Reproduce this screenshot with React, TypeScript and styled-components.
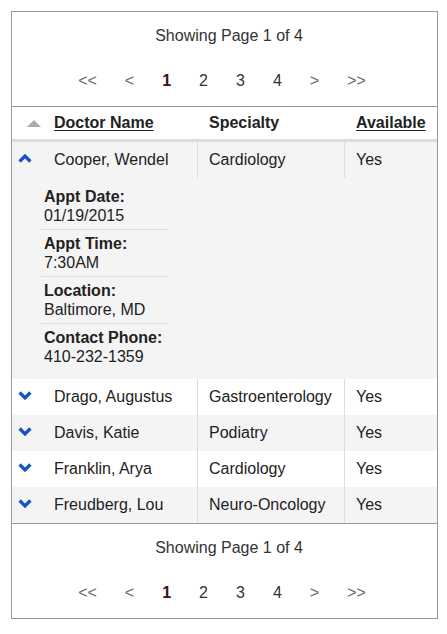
import React from "react";
import styled, { createGlobalStyle } from "styled-components";

const GlobalStyle = createGlobalStyle`
  html, body { margin: 0; padding: 0; background: #fff; }
  body { font-family: "Liberation Sans", Arial, sans-serif; }
`;

const Page = styled.div`
  padding: 11px;
`;

const Card = styled.div`
  width: 427px;
  box-sizing: border-box;
  border: 1px solid #999;
  background: #fff;
  color: #222;
  font-size: 16px;
`;

const PagerSection = styled.div<{ $position: "top" | "bottom" }>`
  height: 95px;
  box-sizing: border-box;
  padding-top: 15px;
  display: flex;
  flex-direction: column;
  align-items: center;
  ${(p) => (p.$position === "top" ? "border-bottom: 1px solid #999;" : "border-top: 1px solid #999;")}
`;

const Status = styled.div`
  line-height: 18px;
  color: #333;
  padding-left: 9px;
`;

const Pager = styled.div`
  margin-top: 27px;
  display: flex;
  gap: 28px;
  line-height: 18px;
  padding-right: 5px;
`;

const PageLink = styled.span<{ $kind: "arrow" | "num" | "active" }>`
  color: ${(p) => (p.$kind === "arrow" ? "#666" : p.$kind === "active" ? "#3d1010" : "#333")};
  font-weight: ${(p) => (p.$kind === "active" ? "bold" : "normal")};
  cursor: pointer;
`;

const GridRow = styled.div`
  display: grid;
  grid-template-columns: 185px 147px 93px;
`;

const HeaderRow = styled(GridRow)`
  height: 35px;
  box-sizing: border-box;
  border-bottom: 3px solid #ddd;
  font-weight: bold;
`;

const HeaderCell = styled.div<{ $first?: boolean; $underline?: boolean }>`
  display: flex;
  align-items: center;
  gap: 13px;
  padding-left: ${(p) => (p.$first ? "15px" : "12px")};
  text-decoration: ${(p) => (p.$underline ? "underline" : "none")};
  text-underline-offset: 2px;
`;

const SortLabel = styled.span`
  text-decoration: underline;
  text-underline-offset: 2px;
`;

const SortTriangle = styled.span`
  width: 0;
  height: 0;
  border-left: 7px solid transparent;
  border-right: 7px solid transparent;
  border-bottom: 7px solid #aaa;
`;

const BodyRow = styled(GridRow)<{ $alt: boolean }>`
  height: 36px;
  background: ${(p) => (p.$alt ? "#f4f4f4" : "#fff")};
`;

const Cell = styled.div<{ $first?: boolean }>`
  display: flex;
  align-items: center;
  gap: 22px;
  padding-left: ${(p) => (p.$first ? "6px" : "11px")};
  border-left: ${(p) => (p.$first ? "none" : "1px solid #ddd")};
  white-space: nowrap;
`;

const ChevronBox = styled.span`
  width: 14px;
  height: 9px;
  display: flex;
  margin-top: -4px;
`;

const Details = styled.div<{ $alt: boolean }>`
  background: ${(p) => (p.$alt ? "#f4f4f4" : "#fff")};
  padding: 5px 0 9px 29px;
`;

const DetailBlock = styled.div`
  width: 125px;
  padding: 4px 0 4px 3px;
  line-height: 19px;
  & + & {
    border-top: 1px solid #ddd;
  }
`;

const DetailLabel = styled.div`
  font-weight: bold;
`;

const DetailValue = styled.div`
  color: #222;
`;

const Chevron = ({ up }: { up: boolean }) => (
  <ChevronBox>
    <svg width="14" height="9" viewBox="0 0 14 9">
      <path
        d={up ? "M1.6 7.5 L7 2.1 L12.4 7.5" : "M1.6 1.5 L7 6.9 L12.4 1.5"}
        fill="none"
        stroke="#1652c9"
        strokeWidth="3.3"
        strokeLinejoin="miter"
      />
    </svg>
  </ChevronBox>
);

type Doctor = { name: string; specialty: string; available: string };

const doctors: Doctor[] = [
  { name: "Cooper, Wendel", specialty: "Cardiology", available: "Yes" },
  { name: "Drago, Augustus", specialty: "Gastroenterology", available: "Yes" },
  { name: "Davis, Katie", specialty: "Podiatry", available: "Yes" },
  { name: "Franklin, Arya", specialty: "Cardiology", available: "Yes" },
  { name: "Freudberg, Lou", specialty: "Neuro-Oncology", available: "Yes" },
];

const details = [
  { label: "Appt Date:", value: "01/19/2015" },
  { label: "Appt Time:", value: "7:30AM" },
  { label: "Location:", value: "Baltimore, MD" },
  { label: "Contact Phone:", value: "410-232-1359" },
];

const PagerBlock = ({ position }: { position: "top" | "bottom" }) => (
  <PagerSection $position={position}>
    <Status>Showing Page 1 of 4</Status>
    <Pager>
      <PageLink $kind="arrow">&lt;&lt;</PageLink>
      <PageLink $kind="arrow">&lt;</PageLink>
      <PageLink $kind="active">1</PageLink>
      <PageLink $kind="num">2</PageLink>
      <PageLink $kind="num">3</PageLink>
      <PageLink $kind="num">4</PageLink>
      <PageLink $kind="arrow">&gt;</PageLink>
      <PageLink $kind="arrow">&gt;&gt;</PageLink>
    </Pager>
  </PagerSection>
);

export default function App() {
  return (
    <Page>
      <GlobalStyle />
      <Card>
        <PagerBlock position="top" />
        <HeaderRow>
          <HeaderCell $first>
            <SortTriangle />
            <SortLabel>Doctor Name</SortLabel>
          </HeaderCell>
          <HeaderCell>Specialty</HeaderCell>
          <HeaderCell $underline>Available</HeaderCell>
        </HeaderRow>
        {doctors.map((d, i) => {
          const alt = i % 2 === 0;
          const open = i === 0;
          return (
            <React.Fragment key={d.name}>
              <BodyRow $alt={alt}>
                <Cell $first>
                  <Chevron up={open} />
                  {d.name}
                </Cell>
                <Cell>{d.specialty}</Cell>
                <Cell>{d.available}</Cell>
              </BodyRow>
              {open && (
                <Details $alt={alt}>
                  {details.map((x) => (
                    <DetailBlock key={x.label}>
                      <DetailLabel>{x.label}</DetailLabel>
                      <DetailValue>{x.value}</DetailValue>
                    </DetailBlock>
                  ))}
                </Details>
              )}
            </React.Fragment>
          );
        })}
        <PagerBlock position="bottom" />
      </Card>
    </Page>
  );
}
